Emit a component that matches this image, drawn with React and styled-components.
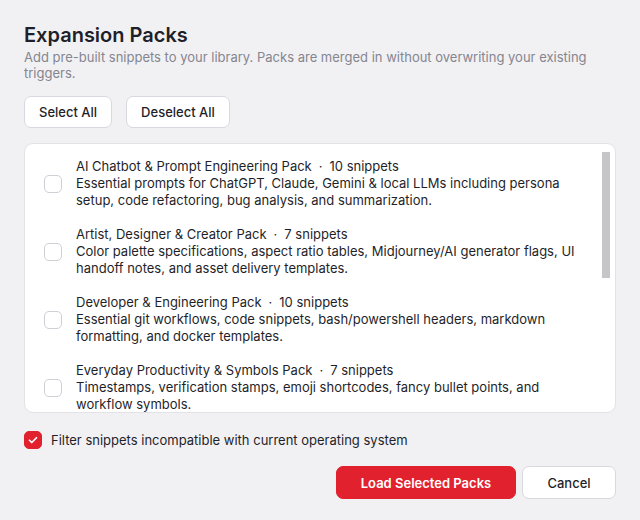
import React, { useEffect, useRef, useState } from "react";
import styled, { createGlobalStyle } from "styled-components";

const GlobalStyle = createGlobalStyle`
  html, body {
    margin: 0;
    background: #f1f1f4;
    font-family: Inter, "Noto Sans", sans-serif;
    color: #1f1f29;
  }
`;

const Dialog = styled.div`
  width: 640px;
  height: 520px;
  box-sizing: border-box;
  padding: 22px 24px 20px 24px;
  display: flex;
  flex-direction: column;
`;

const Title = styled.h1`
  margin: 0;
  font-size: 20px;
  font-weight: 600;
  line-height: 26px;
  color: #1f1f29;
`;

const Subtitle = styled.p`
  margin: 1px 0 0 0;
  font-size: 13px;
  line-height: 16px;
  color: #85858f;
`;

const Toolbar = styled.div`
  display: flex;
  gap: 14px;
  margin-top: 15px;
`;

const Button = styled.button`
  font-family: inherit;
  font-size: 13px;
  height: ${({ $tall }) => ($tall ? 33 : 32)}px;
  padding: 0 14px;
  border-radius: 7px;
  cursor: pointer;
  border: 1px solid ${({ $primary }) => ($primary ? "#e1222e" : "#d8d8de")};
  background: ${({ $primary }) => ($primary ? "#e1222e" : "#ffffff")};
  color: ${({ $primary }) => ($primary ? "#ffffff" : "#1f1f29")};
  font-weight: ${({ $primary }) => ($primary ? 600 : 500)};
  width: ${({ $width }) => ($width ? `${$width}px` : "auto")};
`;

const Panel = styled.div`
  margin-top: 15px;
  height: 270px;
  box-sizing: border-box;
  background: #ffffff;
  border: 1px solid #e2e2e7;
  border-radius: 9px;
  padding: 0 5px 0 0;
  display: flex;
  overflow: hidden;
`;

const List = styled.div`
  flex: 1;
  padding-top: 8px;
  overflow-y: auto;
  scrollbar-width: none;

  &::-webkit-scrollbar {
    display: none;
  }
`;

const ScrollTrack = styled.div`
  flex: none;
  width: 8px;
  padding: 8px 0;
  display: flex;
  flex-direction: column;
`;

const ScrollThumb = styled.div`
  background: #c5c5ca;
  flex: none;
`;

const Item = styled.label`
  display: flex;
  align-items: center;
  gap: 14px;
  padding: 6px 20px 11px 19px;
  cursor: pointer;
`;

const Box = styled.span`
  flex: none;
  width: 18px;
  height: 18px;
  box-sizing: border-box;
  border-radius: 5px;
  border: 1px solid ${({ $checked }) => ($checked ? "#e1222e" : "#cfcfd6")};
  background: ${({ $checked }) => ($checked ? "#e1222e" : "#ffffff")};
  display: flex;
  align-items: center;
  justify-content: center;
`;

const ItemText = styled.div`
  font-size: 13px;
  line-height: 17px;
  color: #1f1f29;
`;

const Dot = styled.span`
  margin: 0 7px;
`;

const FilterRow = styled.label`
  display: flex;
  align-items: center;
  gap: 9px;
  margin-top: 17px;
  cursor: pointer;
`;

const FilterText = styled.span`
  font-size: 13px;
  line-height: 20px;
  color: #1f1f29;
`;

const Footer = styled.div`
  display: flex;
  justify-content: flex-end;
  gap: 6px;
  margin-top: 16px;
`;

const packs = [
  {
    name: "AI Chatbot & Prompt Engineering Pack",
    count: 10,
    desc: "Essential prompts for ChatGPT, Claude, Gemini & local LLMs including persona setup, code refactoring, bug analysis, and summarization.",
  },
  {
    name: "Artist, Designer & Creator Pack",
    count: 7,
    desc: "Color palette specifications, aspect ratio tables, Midjourney/AI generator flags, UI handoff notes, and asset delivery templates.",
  },
  {
    name: "Developer & Engineering Pack",
    count: 10,
    desc: "Essential git workflows, code snippets, bash/powershell headers, markdown formatting, and docker templates.",
  },
  {
    name: "Everyday Productivity & Symbols Pack",
    count: 7,
    desc: "Timestamps, verification stamps, emoji shortcodes, fancy bullet points, and workflow symbols.",
  },
  {
    name: "Customer Support & Email Pack",
    count: 9,
    desc: "Canned replies, greetings, sign-offs, refund and escalation templates for helpdesk and email.",
  },
  {
    name: "Writing & Academic Pack",
    count: 8,
    desc: "Citation formats, outline scaffolds, common phrases and markdown note templates for essays.",
  },
  {
    name: "Math & Science Symbols Pack",
    count: 12,
    desc: "Greek letters, operators, arrows, units and sub/superscript characters for quick notation.",
  },
  {
    name: "Meetings & Calendar Pack",
    count: 6,
    desc: "Agenda outlines, meeting notes, follow-up emails and scheduling replies for busy weeks.",
  },
];

const Check = () => (
  <svg width="12" height="12" viewBox="0 0 24 24" fill="none" stroke="#fff" strokeWidth="3.5" strokeLinecap="round" strokeLinejoin="round">
    <path d="M5 12.5l4.5 4.5L19 7.5" />
  </svg>
);

export default function App() {
  const [selected, setSelected] = useState([]);
  const [filter, setFilter] = useState(true);
  const [thumb, setThumb] = useState({ top: 0, height: 0 });
  const listRef = useRef(null);
  const trackRef = useRef(null);

  // fake scrollbar, the native one is hidden
  const measure = () => {
    const el = listRef.current;
    const track = trackRef.current;
    if (!el || !track) return;
    const trackHeight = track.clientHeight - 16;
    setThumb({
      height: Math.round((trackHeight * el.clientHeight) / (el.scrollHeight - 16)),
      top: Math.round((el.scrollTop / el.scrollHeight) * trackHeight),
    });
  };

  useEffect(measure, []);

  const toggle = (i) =>
    setSelected((s) => (s.includes(i) ? s.filter((x) => x !== i) : [...s, i]));

  return (
    <Dialog>
      <GlobalStyle />
      <Title>Expansion Packs</Title>
      <Subtitle>
        Add pre-built snippets to your library. Packs are merged in without overwriting your existing triggers.
      </Subtitle>
      <Toolbar>
        <Button onClick={() => setSelected(packs.map((_, i) => i))}>Select All</Button>
        <Button onClick={() => setSelected([])}>Deselect All</Button>
      </Toolbar>
      <Panel>
        <List ref={listRef} onScroll={measure}>
          {packs.map((p, i) => (
            <Item key={p.name} onClick={(e) => { e.preventDefault(); toggle(i); }}>
              <Box $checked={selected.includes(i)}>{selected.includes(i) && <Check />}</Box>
              <ItemText>
                {p.name}
                <Dot>·</Dot>
                {p.count} snippets
                <br />
                {p.desc}
              </ItemText>
            </Item>
          ))}
        </List>
        <ScrollTrack ref={trackRef}>
          <ScrollThumb style={{ marginTop: thumb.top, height: thumb.height }} />
        </ScrollTrack>
      </Panel>
      <FilterRow onClick={(e) => { e.preventDefault(); setFilter(!filter); }}>
        <Box $checked={filter}>{filter && <Check />}</Box>
        <FilterText>Filter snippets incompatible with current operating system</FilterText>
      </FilterRow>
      <Footer>
        <Button $primary $tall $width={180}>Load Selected Packs</Button>
        <Button $tall $width={94}>Cancel</Button>
      </Footer>
    </Dialog>
  );
}
